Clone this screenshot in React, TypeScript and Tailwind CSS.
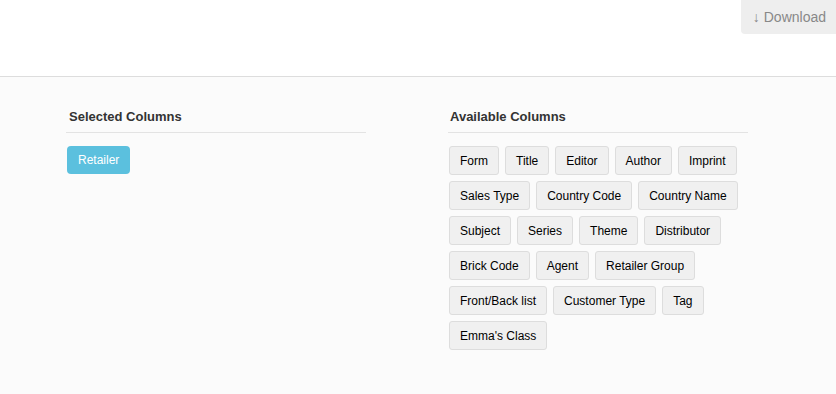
const available = [
  "Form",
  "Title",
  "Editor",
  "Author",
  "Imprint",
  "Sales Type",
  "Country Code",
  "Country Name",
  "Subject",
  "Series",
  "Theme",
  "Distributor",
  "Brick Code",
  "Agent",
  "Retailer Group",
  "Front/Back list",
  "Customer Type",
  "Tag",
  "Emma's Class",
];

export default function App() {
  return (
    <div className="flex h-[394px] w-[836px] flex-col overflow-hidden bg-[#fbfbfb] font-['Liberation_Sans',Arial,sans-serif]">
      <div className="flex h-[77px] shrink-0 items-start justify-end border-b border-[#dddddd] bg-white">
        <button className="h-[34px] rounded-bl-[4px] bg-[#eeeeee] pl-[12px] pr-[10px] text-[14px] text-[#888888]">
          ↓ Download
        </button>
      </div>

      <div className="flex flex-1 pl-[66px] pt-[31px]">
        <div className="w-[382px]">
          <div className="w-[300px] border-b border-[#e3e3e3] pb-[6px] pl-[3px] text-[13px] font-bold leading-[18px] text-[#333333]">
            Selected Columns
          </div>
          <div className="mt-[13px] flex pl-px">
            <button className="h-[28px] rounded-[4px] bg-[#5bc0de] px-[11px] text-[12px] text-white">
              Retailer
            </button>
          </div>
        </div>

        <div className="w-[300px]">
          <div className="border-b border-[#e3e3e3] pb-[6px] pl-[2px] text-[13px] font-bold leading-[18px] text-[#333333]">
            Available Columns
          </div>
          <div className="mt-[13px] flex flex-wrap gap-[6px] pl-[1px]">
            {available.map((name) => (
              <button
                key={name}
                className="h-[29px] rounded-[3px] border border-[#dddddd] bg-[#f0f0f0] px-[10px] text-[12px] text-black"
              >
                {name}
              </button>
            ))}
          </div>
        </div>
      </div>
    </div>
  );
}
